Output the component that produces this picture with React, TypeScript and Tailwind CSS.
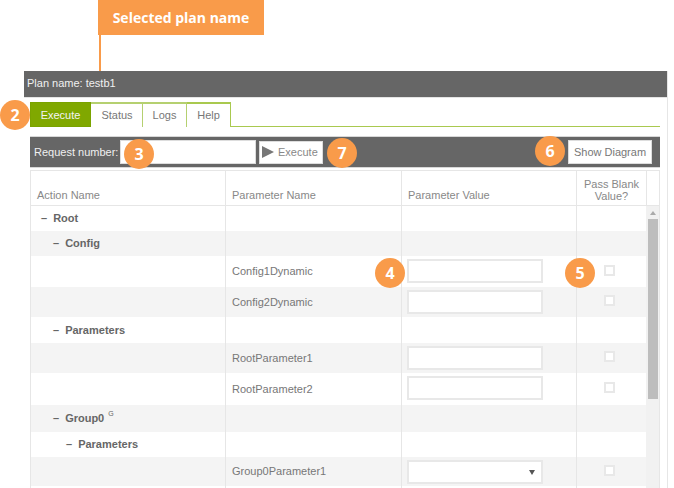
const rows = [
  { kind: 'group', label: 'Root', indent: 'pl-[10px]', h: 'h-[25px]' },
  { kind: 'group', label: 'Config', indent: 'pl-[22px]', h: 'h-[25px]', shade: true },
  { kind: 'input', label: 'Config1Dynamic', h: 'h-[31px]' },
  { kind: 'input', label: 'Config2Dynamic', h: 'h-[30px]', shade: true },
  { kind: 'group', label: 'Parameters', indent: 'pl-[22px]', h: 'h-[26px]' },
  { kind: 'input', label: 'RootParameter1', h: 'h-[30px]', shade: true },
  { kind: 'input', label: 'RootParameter2', h: 'h-[32px]' },
  { kind: 'group', label: 'Group0', indent: 'pl-[22px]', h: 'h-[27px]', shade: true, sup: 'G' },
  { kind: 'group', label: 'Parameters', indent: 'pl-[35px]', h: 'h-[25px]' },
  { kind: 'select', label: 'Group0Parameter1', h: 'h-[29px]', shade: true },
  { kind: 'empty', label: '', h: 'h-[10px]' },
]

function Badge({ n, className }: { n: number; className: string }) {
  return (
    <div className={`absolute z-10 flex h-[30px] w-[30px] items-center justify-center rounded-full bg-[#f99b4a] font-[family-name:'Open_Sans',sans-serif] text-[16px] font-bold text-white ${className}`}>
      {n}
    </div>
  )
}

function Row({ row }: { row: (typeof rows)[number] }) {
  const hasField = row.kind === 'input' || row.kind === 'select'
  return (
    <div className={`flex ${row.h} ${row.shade ? 'bg-[#f4f4f4]' : 'bg-white'}`}>
      <div className={`flex w-[195px] items-center border-r border-[#e6e6e6] text-[11px] font-bold text-[#666] ${row.indent ?? ''}`}>
        {row.kind === 'group' && (
          <>
            <span className="mr-[6px]">–</span>
            {row.label}
            {row.sup && <span className="relative -top-[4px] ml-[4px] text-[7px] font-normal">{row.sup}</span>}
          </>
        )}
      </div>
      <div className="flex w-[176px] items-center border-r border-[#e6e6e6] pl-[6px] text-[11px] text-[#777]">
        {hasField && row.label}
      </div>
      <div className="flex w-[175px] items-start border-r border-[#e6e6e6] pl-[5px] pt-[3px]">
        {hasField && (
          <div className="relative h-[24px] w-[136px] border-2 border-[#e8e8e8] bg-white">
            {row.kind === 'select' && (
              <svg viewBox="0 0 6 5" className="absolute right-[6px] top-[8px] h-[5px] w-[6px]">
                <path d="M0 0h6L3 5z" fill="#555" />
              </svg>
            )}
          </div>
        )}
      </div>
      <div className="flex w-[69px] items-center justify-center pr-[4px]">
        {hasField && <div className="mb-[3px] h-[11px] w-[11px] border-2 border-[#e8e8e8] bg-white" />}
      </div>
    </div>
  )
}

export default function App() {
  return (
    <div className="relative h-[488px] w-[674px] overflow-hidden bg-white font-[family-name:'Liberation_Sans',Arial,sans-serif]">
      <div className="ml-[98px] flex h-[35px] w-[166px] items-center justify-center bg-[#f99b4a] font-[family-name:'Open_Sans',sans-serif] text-[14px] font-bold text-white">
        Selected plan name
      </div>
      <div className="ml-[99px] h-[36px] w-[2px] bg-[#f99b4a]" />

      <div className="ml-[24px] h-[417px] w-[644px] border-r border-[#e6e6e6]">
        <div className="flex h-[27px] items-center border-b border-[#e4e4e4] bg-[#666] pb-[2px] pl-[3px] text-[11px] text-[#f0f0f0]">
          Plan name: testb1
        </div>

        <div className="ml-[6px] mt-[4px] flex h-[25px] w-[630px] text-[11px] text-[#777]">
          <div className="flex h-[25px] w-[61px] items-center justify-center border border-[#7aa300] bg-[#80a800] pt-[1px] text-[#f4f4f4]">Execute</div>
          <div className="flex h-[25px] w-[51px] items-center justify-center border-t-2 border-[#b5d070] pl-[1px]">Status</div>
          <div className="flex h-[25px] w-[45px] items-center justify-center border-x border-t-2 border-[#b5d070]">Logs</div>
          <div className="flex h-[25px] w-[44px] items-center justify-center border-r border-t-2 border-[#a9c94f]">Help</div>
          <div className="flex-1 border-b border-[#a9c94f]" />
        </div>

        <div className="ml-[6px] mt-[9px] flex h-[32px] w-[630px] items-center border-y border-[#d8d8d8] bg-[#666] pl-[4px] pr-[8px] text-[11px]">
          <span className="w-[86px] whitespace-nowrap text-[#f0f0f0]">Request number:</span>
          <div className="h-[24px] w-[136px] border border-[#ddd] bg-white" />
          <div className="ml-[3px] flex h-[23px] w-[64px] items-center border border-[#ddd] bg-white pl-[2px] text-[#888]">
            <svg viewBox="0 0 12 12" className="mr-[4px] h-[12px] w-[12px]">
              <path d="M0 0l12 6L0 12z" fill="#777" />
            </svg>
            Execute
          </div>
          <div className="ml-auto flex h-[24px] w-[84px] items-center justify-center border border-[#ddd] bg-white text-[#777]">Show Diagram</div>
        </div>

        <div className="ml-[6px] mt-[2px] w-[630px] border-x border-t border-[#e6e6e6]">
          <div className="flex h-[35px] border-b border-[#e6e6e6] text-[11px] text-[#888]">
            <div className="flex w-[195px] items-end border-r border-[#e6e6e6] pb-[2px] pl-[6px]">Action Name</div>
            <div className="flex w-[176px] items-end border-r border-[#e6e6e6] pb-[2px] pl-[6px]">Parameter Name</div>
            <div className="flex w-[175px] items-end border-r border-[#e6e6e6] pb-[2px] pl-[6px]">Parameter Value</div>
            <div className="flex w-[70px] items-end justify-center border-r border-[#e6e6e6] pb-[3px] text-center leading-[12px]">Pass Blank Value?</div>
          </div>
          <div className="flex">
            <div className="w-[615px]">
              {rows.map((row, i) => (
                <Row key={i} row={row} />
              ))}
            </div>
            <div className="flex w-[13px] flex-col items-center bg-[#f1f1f1]">
              <svg viewBox="0 0 6 4" className="mt-[5px] h-[4px] w-[6px]">
                <path d="M3 0l3 4H0z" fill="#aaa" />
              </svg>
              <div className="mt-[4px] h-[180px] w-[10px] bg-[#bdbdbd]" />
            </div>
          </div>
        </div>
      </div>

      <Badge n={2} className="left-0 top-[100px]" />
      <Badge n={3} className="left-[124px] top-[139px]" />
      <Badge n={7} className="left-[327px] top-[138px]" />
      <Badge n={6} className="left-[535px] top-[136px]" />
      <Badge n={4} className="left-[375px] top-[258px]" />
      <Badge n={5} className="left-[565px] top-[258px]" />
    </div>
  )
}
